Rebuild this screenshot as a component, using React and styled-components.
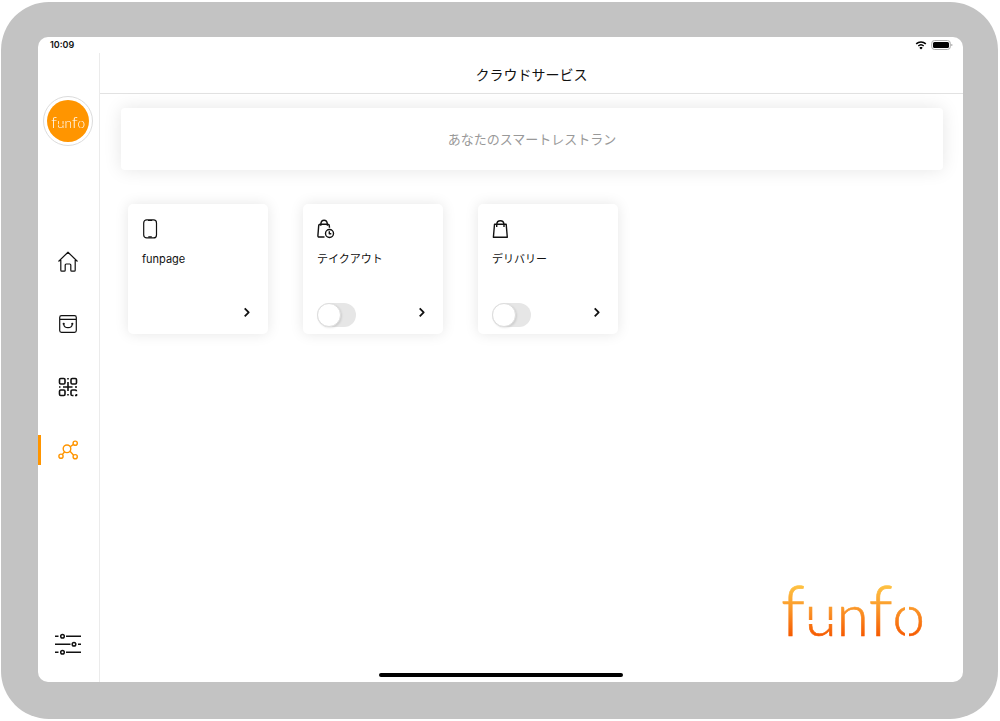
import React, { useState } from "react";
import styled, { createGlobalStyle } from "styled-components";

const GlobalStyle = createGlobalStyle`
  *,
  *::before {
    box-sizing: border-box;
  }

  body {
    margin: 0;
    background: #ffffff;
    color: #111111;
    font-family: Inter, "Noto Sans CJK JP", sans-serif;
  }
`;

const HomeIcon = () => (
  <Icon viewBox="0 0 24 24">
    <path d="M2.500 12.500 12 3.200l9.500 9.300M4.800 11v10.200q0 1 1 1h2.400q1 0 1-1V16q0-1 1-1h3.600q1 0 1 1v5.200q0 1 1 1h2.400q1 0 1-1V11" />
  </Icon>
);

const OrdersIcon = () => (
  <Icon viewBox="0 0 24 24">
    <rect x="3.700" y="3.700" width="16.600" height="16.600" rx="1.800" />
    <path d="M4 7.300h16M7.700 12.200c.5 4.600 8.100 4.600 8.600 0" />
    <circle cx="7.700" cy="11.800" r="0.500" />
    <circle cx="16.300" cy="11.800" r="0.500" />
  </Icon>
);

const QrIcon = () => (
  <Icon viewBox="0 0 24 24" $stroke={1.6}>
    <rect x="3.500" y="3.500" width="5.500" height="5.500" rx="1.200" />
    <rect x="15" y="3.500" width="5.500" height="5.500" rx="1.200" />
    <rect x="3.500" y="15" width="5.500" height="5.500" rx="1.200" />
    <path d="M12 3v1.500M12 7v9M12 19v1.500M3 12h1.500M7 12h9.500M19 12h2M20.500 16.200q0-1.200-1.200-1.200h-3q-1.300 0-1.300 1.200v3q0 1.300 1.300 1.300h1.200M20.500 19v1.500H19" />
  </Icon>
);

const CloudIcon = () => (
  <Icon viewBox="0 0 24 24" $stroke={1.4}>
    <circle cx="11" cy="10.800" r="3.800" />
    <circle cx="19.200" cy="5.200" r="2.100" />
    <circle cx="5" cy="18.200" r="2.100" />
    <circle cx="19.200" cy="18.700" r="2.100" />
    <path d="m14.200 8.700 3.300-2.300M8.600 13.800l-2.300 2.800M14 13.300l3.600 3.900" />
  </Icon>
);

const SettingsIcon = () => (
  <Icon viewBox="0 0 28 24" $width={28} $stroke={1.5}>
    <path d="M1 4.300h3.500M12 4.300h15M1 12.300h15.500M24 12.300h3M1 20.300h3.500M12 20.300h15" />
    <circle cx="8.500" cy="4.300" r="1.800" />
    <circle cx="20" cy="12.300" r="1.800" />
    <circle cx="8.500" cy="20.300" r="1.800" />
  </Icon>
);

const PhoneIcon = () => (
  <Icon viewBox="0 0 22 22" $width={22} $height={22}>
    <rect x="1.700" y="1.900" width="12.800" height="18" rx="3" />
    <path d="M6 2.500h4.200M6.300 18.900h3.500" />
  </Icon>
);

const TakeoutIcon = () => (
  <Icon viewBox="0 0 22 22" $width={22} $height={22} $stroke={1.4}>
    <path d="M7.500 19H2.200q-1.400 0-1.300-1.400l.8-10q.1-1.400 1.400-1.400h7.800q1.300 0 1.400 1.400l.2 2.200M3.800 6c.5-5 6-5 6.600 0M3.800 6.200v1.500M10.400 6.200v1.500" />
    <circle cx="12.500" cy="15.500" r="4" />
    <path d="M12.300 13.200v2.600h2" />
  </Icon>
);

const DeliveryIcon = () => (
  <Icon viewBox="0 0 22 22" $width={22} $height={22} $stroke={1.4}>
    <path d="M2.500 6.300h11.700l1.100 13H1.400zM4.700 9V6.300c.3-4.800 7-4.800 7.300 0V9" />
  </Icon>
);

const ChevronIcon = () => (
  <Icon viewBox="0 0 10 20" $width={10} $height={20} $stroke={1.8}>
    <path d="m0.700 3.300 4 4-4 4" />
  </Icon>
);

const WifiIcon = () => (
  <Icon viewBox="0 0 12 10" $width={12} $height={10} $stroke={1.5}>
    <path d="M1.200 3.900c2.700-2.500 6.900-2.500 9.600 0M3.300 6c1.500-1.400 3.900-1.400 5.400 0" />
    <path d="M5.300 7.700h1.400L6 8.500z" />
  </Icon>
);

const BatteryIcon = () => (
  <Icon viewBox="0 0 22 10" $width={22} $height={10} $stroke={1}>
    <rect x="0.700" y="0.500" width="18.600" height="9" rx="2.800" stroke="#aaaaaa" />
    <rect x="2" y="1.900" width="16" height="6.200" rx="1.500" fill="#000000" stroke="none" />
    <path d="M20.800 4v2" stroke="#aaaaaa" />
  </Icon>
);

// The gaps in the "u" and the "o" are cut out with a mask
const Wordmark = ({ id, small }) => {
  const paint = small ? "#ffffff" : `url(#${id}-fill)`;

  return (
    <WordmarkSvg viewBox="0 0 142 64" $small={small}>
      <defs>
        <linearGradient id={`${id}-fill`} gradientUnits="userSpaceOnUse" x1="0" y1="2" x2="0" y2="60">
          <stop offset="0" stopColor="#ffd04a" />
          <stop offset="0.5" stopColor="#fb9a2b" />
          <stop offset="1" stopColor="#f65a00" />
        </linearGradient>
        <mask id={`${id}-gaps`} maskUnits="userSpaceOnUse" x="-10" y="-10" width="170" height="90">
          <rect x="-10" y="-10" width="170" height="90" fill="#ffffff" />
          <rect x="22" y="44" width="32" height="4" fill="#000000" />
          <rect x="124" y="20" width="4" height="44" fill="#000000" />
        </mask>
      </defs>
      <text x="0" y="60" fill={paint} stroke={paint} mask={`url(#${id}-gaps)`}>
        <TallLetter>f</TallLetter>un<TallLetter>f</TallLetter>o
      </text>
    </WordmarkSvg>
  );
};

const navItems = [
  { id: "home", label: "ホーム", icon: <HomeIcon /> },
  { id: "orders", label: "注文", icon: <OrdersIcon /> },
  { id: "qr", label: "QRコード", icon: <QrIcon /> },
  { id: "cloud", label: "クラウドサービス", icon: <CloudIcon /> },
];

const services = [
  { id: "funpage", name: "funpage", icon: <PhoneIcon /> },
  { id: "takeout", name: "テイクアウト", icon: <TakeoutIcon />, toggle: true },
  { id: "delivery", name: "デリバリー", icon: <DeliveryIcon />, toggle: true },
];

const ServiceCard = ({ service }) => {
  const [enabled, setEnabled] = useState(false);
  const { id, name, icon, toggle } = service;

  return (
    <Card>
      {icon}
      {toggle ? (
        <CardLabel as="label" id={`${id}-name`} htmlFor={`${id}-switch`}>
          {name}
        </CardLabel>
      ) : (
        <CardLabel id={`${id}-name`}>{name}</CardLabel>
      )}
      <CardFooter>
        {toggle && (
          <Switch
            id={`${id}-switch`}
            type="checkbox"
            checked={enabled}
            onChange={() => setEnabled(!enabled)}
          />
        )}
        <CardLink href={`#${id}`} aria-labelledby={`${id}-name`}>
          <ChevronIcon />
        </CardLink>
      </CardFooter>
    </Card>
  );
};

const App = () => {
  return (
    <Device>
      <GlobalStyle />
      <Screen>
        <StatusBar>
          <Time>10:09</Time>
          <StatusIcons>
            <WifiIcon />
            <BatteryIcon />
          </StatusIcons>
        </StatusBar>
        <Body>
          <Sidebar>
            <Avatar href="#profile" aria-label="funfo">
              <AvatarDisc>
                <Wordmark id="avatar" small />
              </AvatarDisc>
            </Avatar>
            <Nav>
              {navItems.map((item) => (
                <NavLink
                  key={item.id}
                  href={`#${item.id}`}
                  aria-label={item.label}
                  $active={item.id === "cloud"}
                >
                  {item.icon}
                </NavLink>
              ))}
            </Nav>
            <SettingsButton type="button" aria-label="設定">
              <SettingsIcon />
            </SettingsButton>
          </Sidebar>
          <Main>
            <Header>
              <Title>クラウドサービス</Title>
            </Header>
            <Content>
              <Banner>あなたのスマートレストラン</Banner>
              <Cards>
                {services.map((service) => (
                  <ServiceCard key={service.id} service={service} />
                ))}
              </Cards>
              <Brand>
                <Wordmark id="brand" />
              </Brand>
            </Content>
          </Main>
        </Body>
        <HomeIndicator />
      </Screen>
    </Device>
  );
};

const Icon = styled.svg.attrs({ "aria-hidden": true })`
  display: block;
  flex: none;
  width: ${({ $width = 24 }) => $width}px;
  height: ${({ $height = 24 }) => $height}px;
  fill: none;
  stroke: currentColor;
  stroke-width: ${({ $stroke = 1.2 }) => $stroke};
  stroke-linejoin: round;
`;

const WordmarkSvg = styled.svg`
  display: block;
  width: ${({ $small }) => ($small ? 34 : 142)}px;
  height: ${({ $small }) => ($small ? 15 : 64)}px;
  overflow: visible;
  font-family: Lato, sans-serif;
  font-size: 58px;
  font-weight: 300;
  stroke-width: ${({ $small }) => ($small ? 0 : 0.6)};
`;

const TallLetter = styled.tspan`
  font-size: 70px;
`;

const Device = styled.div`
  display: flex;
  min-height: calc(100vh - 4px);
  margin: 2px 2px 2px 1px;
  padding: 35px 35px 37px 37px;
  border-radius: 48px;
  background: #c3c3c3;
`;

const Screen = styled.div`
  position: relative;
  display: flex;
  flex: 1;
  flex-direction: column;
  min-width: 0;
  overflow: hidden;
  border-radius: 10px;
  background: #ffffff;
`;

const StatusBar = styled.div`
  display: flex;
  align-items: center;
  justify-content: space-between;
  height: 16px;
  padding: 0 10px 0 12px;
`;

const Time = styled.span`
  font-size: 9px;
  font-weight: 600;
  line-height: 16px;
`;

const StatusIcons = styled.div`
  display: flex;
  align-items: center;
  gap: 4px;
  color: #000000;
`;

const Body = styled.div`
  display: flex;
  flex: 1;
`;

const Sidebar = styled.aside`
  display: flex;
  flex: none;
  flex-direction: column;
  align-items: center;
  width: 62px;
  padding: 43px 1px 23px 0;
  border-right: 1px solid #ebebeb;
`;

const Avatar = styled.a`
  width: 50px;
  height: 50px;
  padding: 3px;
  border: 1px solid #dcdcdc;
  border-radius: 50%;
`;

const AvatarDisc = styled.span`
  display: flex;
  align-items: center;
  justify-content: center;
  height: 100%;
  border-radius: 50%;
  background: #ff9500;
`;

const Nav = styled.nav`
  display: flex;
  flex-direction: column;
  gap: 33px;
  width: 100%;
  margin-top: 100px;
`;

const NavLink = styled.a`
  display: flex;
  align-items: center;
  justify-content: center;
  height: 30px;
  padding-right: 3px;
  border-left: 3px solid ${({ $active }) => ($active ? "#ff9500" : "transparent")};
  color: ${({ $active }) => ($active ? "#ff9500" : "#111111")};
`;

const SettingsButton = styled.button`
  display: flex;
  align-items: center;
  justify-content: center;
  width: 40px;
  height: 30px;
  margin-top: auto;
  padding: 0;
  border: 0;
  background: none;
  color: #111111;
  cursor: pointer;
`;

const Main = styled.main`
  display: flex;
  flex: 1;
  flex-direction: column;
  min-width: 0;
`;

const Header = styled.header`
  padding: 12px 0 8px;
  border-bottom: 1px solid #e2e2e2;
`;

const Title = styled.h1`
  margin: 0;
  font-size: 14px;
  font-weight: 400;
  line-height: 20px;
  text-align: center;
`;

const Content = styled.div`
  display: flex;
  flex: 1;
  flex-direction: column;
  padding: 14px 20px 42px 21px;
`;

const Banner = styled.p`
  margin: 0;
  padding: 20px;
  border-radius: 4px;
  box-shadow: 0 0 18px rgba(0, 0, 0, 0.1);
  color: #999999;
  font-size: 13px;
  line-height: 22px;
  text-align: center;
`;

const Cards = styled.div`
  display: flex;
  flex-wrap: wrap;
  gap: 35px;
  margin: 34px 7px;
`;

const Card = styled.article`
  display: flex;
  flex-direction: column;
  width: 140px;
  height: 130px;
  padding: 14px 14px 7px;
  border-radius: 5px;
  box-shadow: 0 0 14px rgba(0, 0, 0, 0.1);
`;

const CardLabel = styled.span`
  margin-top: 11px;
  font-size: 11px;
  font-weight: 400;
  line-height: 16px;
`;

const CardFooter = styled.div`
  display: flex;
  align-items: center;
  height: 24px;
  margin-top: auto;
`;

const Switch = styled.input`
  appearance: none;
  width: 39px;
  height: 24px;
  margin: 0;
  border-radius: 12px;
  background: #e6e6e6;
  cursor: pointer;

  &::before {
    content: "";
    display: block;
    width: 24px;
    height: 24px;
    border: 1px solid #dddddd;
    border-radius: 50%;
    background: #ffffff;
    box-shadow: 1px 1px 2px rgba(0, 0, 0, 0.1);
  }

  &:checked {
    background: #ff9500;
  }

  &:checked::before {
    margin-left: auto;
  }
`;

const CardLink = styled.a`
  margin-left: auto;
  color: #111111;
`;

const Brand = styled.div`
  align-self: flex-end;
  margin-top: auto;
  margin-right: 20px;
`;

const HomeIndicator = styled.div`
  position: absolute;
  bottom: 5px;
  left: 50%;
  width: 244px;
  height: 4px;
  margin-left: -122px;
  border-radius: 2px;
  background: #000000;
`;

export default App;
